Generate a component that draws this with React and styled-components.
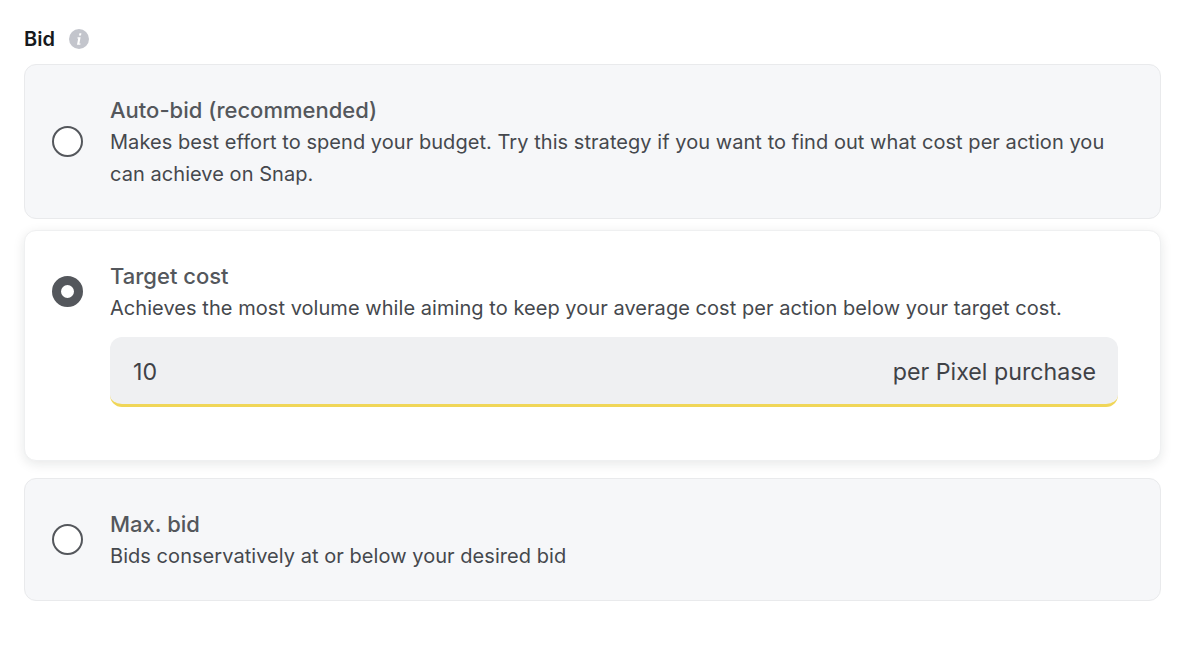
import React from "react";
import styled, { createGlobalStyle } from "styled-components";

const Global = createGlobalStyle`
  html, body { margin: 0; padding: 0; background: #fff; }
  body { font-family: Inter, "Liberation Sans", sans-serif; }
`;

const Page = styled.div`
  width: 1200px;
  height: 655px;
  box-sizing: border-box;
  padding: 26px 39px 0 24px;
  overflow: hidden;
`;

const Heading = styled.div`
  display: flex;
  align-items: center;
  gap: 14px;
  height: 26px;
  margin-bottom: 12px;
`;

const HeadingText = styled.span`
  font-size: 20px;
  font-weight: 600;
  color: #16191c;
`;

const Options = styled.div`
  display: flex;
  flex-direction: column;
`;

const Card = styled.div`
  box-sizing: border-box;
  height: ${(p) => p.$height}px;
  margin-top: ${(p) => p.$top}px;
  padding: 29px 42px 0 27px;
  border-radius: 12px;
  border: 1.5px solid ${(p) => (p.$active ? "#eff0f1" : "#e9eaec")};
  background: ${(p) => (p.$active ? "#ffffff" : "#f6f7f9")};
  box-shadow: ${(p) => (p.$active ? "0 3px 12px rgba(22, 25, 28, 0.1)" : "none")};
`;

const Row = styled.div`
  display: flex;
  align-items: center;
  gap: 27px;
`;

const Radio = styled.span`
  flex: none;
  box-sizing: border-box;
  width: 31px;
  height: 31px;
  margin-bottom: 2px;
  border-radius: 50%;
  background: #fff;
  border: ${(p) => (p.$on ? "9.5px solid #54575c" : "2px solid #54575c")};
`;

const Texts = styled.div`
  flex: 1;
  min-width: 0;
`;

const Title = styled.div`
  font-size: 22px;
  line-height: 32px;
  font-weight: 500;
  color: #54575c;
`;

const Desc = styled.div`
  font-size: 20px;
  letter-spacing: 0.05px;
  line-height: 32px;
  font-weight: 400;
  color: #45484d;
`;

const Field = styled.div`
  box-sizing: border-box;
  display: flex;
  justify-content: space-between;
  align-items: center;
  height: 70px;
  margin: 13px 0 0 58px;
  padding: 2px 22px 0 23px;
  background: #eff0f2;
  border-radius: 12px;
  border-bottom: 3px solid #f0d658;
  font-size: 23.2px;
  color: #3f4247;
`;

const Info = () => (
  <svg width="20" height="20" viewBox="0 0 20 20" aria-hidden="true">
    <circle cx="10" cy="10" r="10" fill="#c3c5cc" />
    <path d="M8.6 8.2h3l-1.2 6.4h1.2l-.3 1.2H8l1.2-6.4H8.3z M10.4 4.2h2l-.4 2.2h-2z" fill="#fff" />
  </svg>
);

export default function App() {
  return (
    <Page>
      <Global />
      <Heading>
        <HeadingText>Bid</HeadingText>
        <Info />
      </Heading>
      <Options>
        <Card $height={155} $top={0}>
          <Row>
            <Radio />
            <Texts>
              <Title>Auto-bid (recommended)</Title>
              <Desc>
                Makes best effort to spend your budget. Try this strategy if you want to find out what cost per action you can achieve on Snap.
              </Desc>
            </Texts>
          </Row>
        </Card>
        <Card $height={231} $top={11} $active>
          <Row>
            <Radio $on />
            <Texts>
              <Title>Target cost</Title>
              <Desc>Achieves the most volume while aiming to keep your average cost per action below your target cost.</Desc>
            </Texts>
          </Row>
          <Field>
            <span>10</span>
            <span>per Pixel purchase</span>
          </Field>
        </Card>
        <Card $height={123} $top={17}>
          <Row>
            <Radio />
            <Texts>
              <Title>Max. bid</Title>
              <Desc>Bids conservatively at or below your desired bid</Desc>
            </Texts>
          </Row>
        </Card>
      </Options>
    </Page>
  );
}
